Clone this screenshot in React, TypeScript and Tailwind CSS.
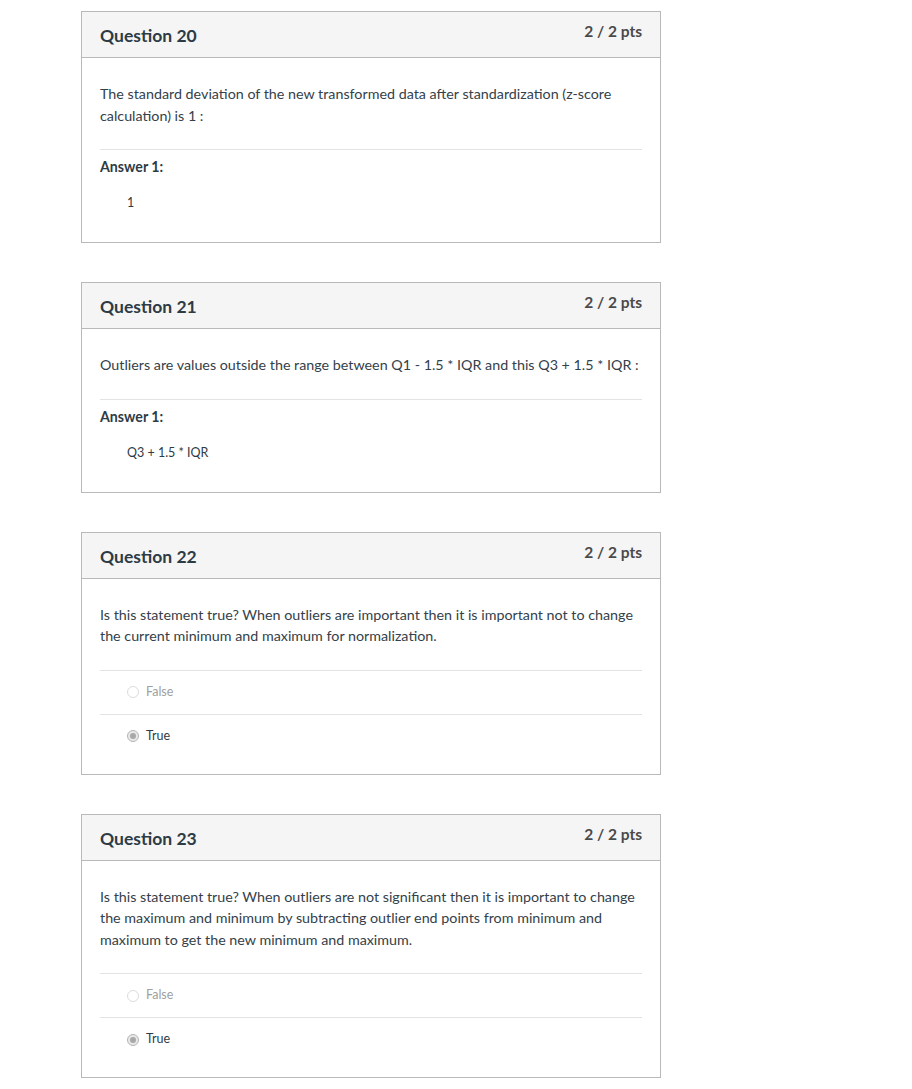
import React from "react";

type Question = {
  number: number;
  text: string;
  kind: "fill" | "choice";
  answer?: string;
};

const questions: Question[] = [
  {
    number: 20,
    text: "The standard deviation of the new transformed data after standardization (z-score calculation) is 1 :",
    kind: "fill",
    answer: "1",
  },
  {
    number: 21,
    text: "Outliers are values outside the range between Q1 - 1.5 * IQR and this Q3 + 1.5 * IQR :",
    kind: "fill",
    answer: "Q3 + 1.5 * IQR",
  },
  {
    number: 22,
    text: "Is this statement true? When outliers are important then it is important not to change the current minimum and maximum for normalization.",
    kind: "choice",
  },
  {
    number: 23,
    text: "Is this statement true? When outliers are not significant then it is important to change the maximum and minimum by subtracting outlier end points from minimum and maximum to get the new minimum and maximum.",
    kind: "choice",
  },
];

const Radio = ({ checked }: { checked: boolean }) => (
  <span
    className={
      checked
        ? "flex h-[12px] w-[12px] items-center justify-center rounded-full border border-[#b5b5b5] bg-[#e8e8e8]"
        : "flex h-[12px] w-[12px] items-center justify-center rounded-full border border-[#dcdcdc] bg-white"
    }
  >
    {checked && <span className="h-[6px] w-[6px] rounded-full bg-[#a8a8a8]" />}
  </span>
);

const QuestionCard = ({ q }: { q: Question }) => (
  <div className="w-[580px] border border-[#b9b9b9] bg-white">
    <div className="flex h-[46px] justify-between border-b border-[#b9b9b9] bg-[#f5f5f5] px-[18px]">
      <div className="pt-[13px] text-[17.5px] leading-[22px] font-bold text-[#2d3b45]">
        Question {q.number}
      </div>
      <div className="pt-[9px] text-[15.5px] leading-[20px] font-bold text-[#4a4a4a]">
        2 / 2 pts
      </div>
    </div>
    <div className="pl-[18px] pr-[16px] pt-[25px]">
      <p className="mb-[23px] pr-[2px] text-[14.3px] leading-[21.5px] text-[#34414a]">{q.text}</p>
      {q.kind === "fill" ? (
        <div className="mr-[2px] border-t border-[#e3e3e3] pb-[29px]">
          <div className="pt-[7px] text-[14.2px] leading-[20px] font-bold text-[#2d3b45]">Answer 1:</div>
          <div className="mt-[16px] pl-[27px] text-[12.5px] leading-[20px] text-[#2d3b45]">{q.answer}</div>
        </div>
      ) : (
        <div className="mr-[2px] pb-[16px]">
          <div className="flex h-[44px] items-center gap-[7px] border-t border-[#e3e3e3] pl-[27px]">
            <Radio checked={false} />
            <span className="text-[12.5px] text-[#a0a0a0]">False</span>
          </div>
          <div className="flex h-[44px] items-center gap-[7px] border-t border-[#e3e3e3] pl-[27px]">
            <Radio checked={true} />
            <span className="text-[12.5px] text-[#2d3b45]">True</span>
          </div>
        </div>
      )}
    </div>
  </div>
);

export default function App() {
  return (
    <div
      className="min-h-[1089px] bg-white pl-[81px] pt-[11px]"
      style={{ fontFamily: "Lato, 'Liberation Sans', sans-serif" }}
    >
      <div className="flex flex-col gap-[39px]">
        {questions.map((q) => (
          <QuestionCard key={q.number} q={q} />
        ))}
      </div>
    </div>
  );
}
